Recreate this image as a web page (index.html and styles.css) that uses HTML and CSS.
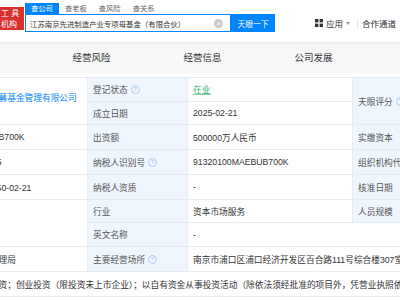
FILE: index.html
```html
<!DOCTYPE html>
<html lang="zh-CN">
<head>
  <meta charset="UTF-8" />
  <title>江苏南京先进制造产业专项母基金（有限合伙）</title>
  <link rel="stylesheet" href="styles.css">
</head>
<body>
  <!-- Top search bar -->
  <div class="topbar">
    <div class="logo"><span>工 具</span><span>机构</span></div>
    <div class="search">
      <div class="search-tabs">
        <span class="stab active">查公司</span>
        <span class="stab">查老板</span>
        <span class="stab">查风险</span>
        <span class="stab">查关系</span>
      </div>
      <div class="search-row">
        <div class="search-input">
          <span class="query">江苏南京先进制造产业专项母基金（有限合伙）</span>
          <span class="clear">×</span>
        </div>
        <button class="search-btn">天眼一下</button>
      </div>
    </div>
    <div class="nav">
      <svg class="grid-icon" width="8" height="8" viewBox="0 0 8 8">
        <rect x="0" y="0" width="3.4" height="3.4" fill="#333"/>
        <rect x="4.6" y="0" width="3.4" height="3.4" fill="#333"/>
        <rect x="0" y="4.6" width="3.4" height="3.4" fill="#333"/>
        <rect x="4.6" y="4.6" width="3.4" height="3.4" fill="#333"/>
      </svg>
      <span class="nav-text">应用</span>
      <span class="caret"></span>
      <span class="divider"></span>
      <span class="nav-text partner">合作通道</span>
    </div>
  </div>

  <!-- Section tabs -->
  <div class="tabbar">
    <span class="tab">司法风险</span>
    <span class="tab">经营风险</span>
    <span class="tab">经营信息</span>
    <span class="tab">公司发展</span>
    <span class="tab">知识产权</span>
  </div>

  <!-- Business info table -->
  <div class="info">
    <div class="cell tall name"><a class="link">南京扬子江投资私募基金管理有限公司</a></div>
    <div class="cell label">登记状态<span class="help">?</span></div>
    <div class="cell"><span class="status">在业</span></div>
    <div class="cell label tall">天眼评分<span class="help">?</span></div>
    <div class="cell tall">-</div>

    <div class="cell label">成立日期</div>
    <div class="cell">2025-02-21</div>

    <div class="cell">91320100MAEBUB700K</div>
    <div class="cell label">出资额</div>
    <div class="cell">500000万人民币</div>
    <div class="cell label">实缴资本</div>
    <div class="cell">-</div>

    <div class="cell">320191000069915</div>
    <div class="cell label">纳税人识别号<span class="help">?</span></div>
    <div class="cell">91320100MAEBUB700K</div>
    <div class="cell label">组织机构代码</div>
    <div class="cell">MAEBUB70-0</div>

    <div class="cell">2025-02-21 至 2050-02-21</div>
    <div class="cell label">纳税人资质</div>
    <div class="cell">-</div>
    <div class="cell label">核准日期</div>
    <div class="cell">2025-02-21</div>

    <div class="cell tall"></div>
    <div class="cell label">行业</div>
    <div class="cell">资本市场服务</div>
    <div class="cell label">人员规模</div>
    <div class="cell">-</div>

    <div class="cell label">英文名称</div>
    <div class="cell wide">-</div>

    <div class="cell">南京市市场监督管理局</div>
    <div class="cell label">主要经营场所<span class="help">?</span></div>
    <div class="cell wide">南京市浦口区浦口经济开发区百合路111号综合楼307室</div>

    <div class="cell full">一般项目：股权投资；创业投资（限投资未上市企业）；以自有资金从事投资活动（除依法须经批准的项目外，凭营业执照依法自主开展经营活动）</div>
  </div>
</body>
</html>
```

FILE: styles.css
```css
body {
  margin: 0;
  width: 400px;
  height: 300px;
  overflow: hidden;
  background: #fff;
  color: #333;
  font-family: "Liberation Sans", "Noto Sans CJK SC", sans-serif;
}

/* top bar */
.topbar {
  position: relative;
  z-index: 1;
  height: 42px;
  display: flex;
  align-items: flex-start;
  background: #fff;
  box-shadow: 0 1px 3px rgba(0, 0, 0, 0.07);
}

.logo {
  width: 24px;
  height: 23px;
  margin-top: 7px;
  padding-left: 1px;
  box-sizing: border-box;
  background: #d8302c;
  color: #fff;
  font-size: 8px;
  line-height: 11px;
  display: flex;
  flex-direction: column;
  justify-content: center;
}

.search {
  margin-left: 1px;
  margin-top: 3px;
}

.search-tabs {
  display: flex;
  height: 11px;
}

.stab {
  padding: 0 6px;
  font-size: 7.3px;
  line-height: 11px;
  color: #666;
}

.stab.active {
  background: #0084ff;
  color: #fff;
}

.search-row {
  display: flex;
  height: 18px;
}

.search-input {
  width: 206px;
  height: 18px;
  box-sizing: border-box;
  border: 1px solid #0084ff;
  padding: 0 7px 0 4px;
  display: flex;
  align-items: center;
  justify-content: space-between;
  font-size: 7.4px;
  color: #333;
}

.clear {
  width: 9px;
  height: 9px;
  border-radius: 50%;
  background: #c9c9c9;
  color: #fff;
  font-size: 8px;
  line-height: 9px;
  text-align: center;
}

.search-btn {
  width: 44px;
  height: 18px;
  padding: 0;
  border: 0;
  background: #0084ff;
  color: #fff;
  font-family: inherit;
  font-size: 7.8px;
}

.nav {
  display: flex;
  align-items: center;
  height: 18px;
  margin-top: 14px;
  margin-left: 40px;
  white-space: nowrap;
}

.grid-icon {
  margin-right: 3px;
}

.nav-text {
  font-size: 8.5px;
  color: #333;
}

.caret {
  margin-left: 3px;
  border-left: 2px solid transparent;
  border-right: 2px solid transparent;
  border-top: 3px solid #999;
}

.divider {
  width: 1px;
  height: 9px;
  margin-left: 7px;
  background: #e2e2e2;
}

.partner {
  margin-left: 4px;
}

/* section tabs */
.tabbar {
  display: flex;
  height: 31px;
  margin-left: -75px;
  background: #f7f7f8;
}

.tab {
  flex: 0 0 111px;
  text-align: center;
  font-size: 9.5px;
  line-height: 31px;
  color: #333;
}

/* info table */
.info {
  margin-top: 4px;
  margin-left: -77px;
  display: grid;
  grid-template-columns: 164px 100px 165px 100px 165px;
  grid-template-rows: 24px 23px 25px 25px 25px 23px 24px 25px 25px;
  border-top: 1px solid #e6ecf3;
}

.cell {
  box-sizing: border-box;
  display: flex;
  align-items: center;
  padding-left: 5px;
  border-left: 1px solid #e6ecf3;
  border-bottom: 1px solid #e6ecf3;
  font-size: 8.7px;
  color: #333;
  white-space: nowrap;
  overflow: hidden;
}

.label {
  background: #eff6fe;
  color: #555;
}

.tall {
  grid-row: span 2;
}

.wide {
  grid-column: span 3;
}

.full {
  grid-column: span 5;
}

.name {
  padding-bottom: 7px;
}

.link {
  color: #0084ff;
}

.status {
  color: #2eaf6e;
  text-decoration: underline;
  text-decoration-color: #8fd6b0;
}

.help {
  display: inline-block;
  width: 7px;
  height: 7px;
  margin-left: 3px;
  border: 1px solid #aecbef;
  border-radius: 50%;
  color: #9dbfea;
  font-size: 6px;
  line-height: 7px;
  text-align: center;
}
```
